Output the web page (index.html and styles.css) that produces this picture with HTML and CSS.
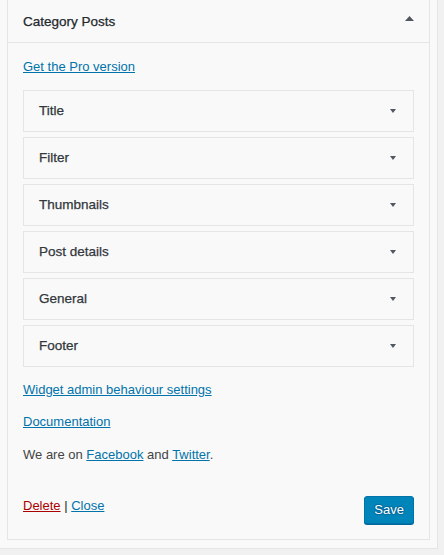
FILE: index.html
```html
<!DOCTYPE html>
<html lang="en">
<head>
<meta charset="utf-8">
<title>Category Posts widget</title>
<link rel="stylesheet" href="styles.css">
</head>
<body>
<div class="sidebar">
  <div class="widget">
    <div class="widget-top">
      <h3 class="widget-title">Category Posts</h3>
      <svg class="toggle" width="9" height="5" viewBox="0 0 9 5" aria-hidden="true"><path d="M0 5 L4.5 0 L9 5 Z"/></svg>
    </div>
    <div class="widget-inside">
      <p><a href="#">Get the Pro version</a></p>
      <div class="sections">
        <div class="section"><h4>Title</h4><svg class="caret" width="6" height="4" viewBox="0 0 6 4" aria-hidden="true"><path d="M0 0 L6 0 L3 4 Z"/></svg></div>
        <div class="section"><h4>Filter</h4><svg class="caret" width="6" height="4" viewBox="0 0 6 4" aria-hidden="true"><path d="M0 0 L6 0 L3 4 Z"/></svg></div>
        <div class="section"><h4>Thumbnails</h4><svg class="caret" width="6" height="4" viewBox="0 0 6 4" aria-hidden="true"><path d="M0 0 L6 0 L3 4 Z"/></svg></div>
        <div class="section"><h4>Post details</h4><svg class="caret" width="6" height="4" viewBox="0 0 6 4" aria-hidden="true"><path d="M0 0 L6 0 L3 4 Z"/></svg></div>
        <div class="section"><h4>General</h4><svg class="caret" width="6" height="4" viewBox="0 0 6 4" aria-hidden="true"><path d="M0 0 L6 0 L3 4 Z"/></svg></div>
        <div class="section"><h4>Footer</h4><svg class="caret" width="6" height="4" viewBox="0 0 6 4" aria-hidden="true"><path d="M0 0 L6 0 L3 4 Z"/></svg></div>
      </div>
      <p><a href="#">Widget admin behaviour settings</a></p>
      <p><a href="#">Documentation</a></p>
      <p>We are on <a href="#">Facebook</a> and <a href="#">Twitter</a>.</p>
      <div class="actions">
        <div class="actions-left"><a href="#" class="delete">Delete</a> | <a href="#">Close</a></div>
        <button class="button-primary" type="button">Save</button>
      </div>
    </div>
  </div>
</div>
</body>
</html>
```
FILE: styles.css
```css
html, body {
  margin: 0;
  padding: 0;
}

body {
  background: #f1f1f1;
  font-family: "Liberation Sans", Arial, sans-serif;
  font-size: 13px;
  line-height: 1.5;
  color: #444;
}

.sidebar {
  box-sizing: border-box;
  width: 438px;
  height: 549px;
  padding: 0 7px;
  background: #f9f9f9;
  border-right: 1px solid #e5e5e5;
  border-bottom: 1px solid #e5e5e5;
}

.widget {
  background: #f9f9f9;
  border: 1px solid #e5e5e5;
  border-top: none;
}

.widget-top {
  box-sizing: border-box;
  display: flex;
  align-items: center;
  height: 43px;
  padding: 2px 15px 0;
  border-bottom: 1px solid #e5e5e5;
}

.widget-title {
  margin: 0;
  font-size: 13.5px;
  font-weight: 400;
  line-height: 1;
  color: #23282d;
  -webkit-text-stroke: 0.25px #23282d;
}

.toggle {
  margin-left: auto;
  align-self: flex-start;
  margin-top: 14px;
  fill: #50575e;
}

.widget-inside {
  padding: 1px 15px 15px;
}

.widget-inside p {
  margin: 13px 0;
}

a {
  color: #0073aa;
  text-decoration: underline;
}

.sections {
  display: flex;
  flex-direction: column;
  gap: 5px;
  margin: 12px 0 13px;
}

.section {
  box-sizing: border-box;
  display: flex;
  align-items: center;
  height: 42px;
  padding: 0 17px 0 15px;
  border: 1px solid #e5e5e5;
  background: #f9f9f9;
}

.section h4 {
  margin: 0;
  font-size: 13.5px;
  font-weight: 400;
  line-height: 1;
  color: #32373c;
  -webkit-text-stroke: 0.25px #32373c;
}

.caret {
  margin-left: auto;
  margin-top: 1px;
  fill: #50575e;
}

.actions {
  display: flex;
  justify-content: space-between;
  align-items: flex-start;
  margin-top: 32px;
}

.actions-left {
  color: #23282d;
}

.delete {
  color: #a00;
}

.button-primary {
  box-sizing: border-box;
  height: 28px;
  margin: 0;
  padding: 0 9px 1px;
  font-family: inherit;
  font-size: 13px;
  line-height: 26px;
  color: #fff;
  background: #0085ba;
  border: 1px solid #0073aa;
  border-radius: 3px;
  box-shadow: 0 1px 0 #006799;
  text-shadow: 0 -1px 1px #006799, 1px 0 1px #006799, 0 1px 1px #006799, -1px 0 1px #006799;
  cursor: pointer;
}
```
